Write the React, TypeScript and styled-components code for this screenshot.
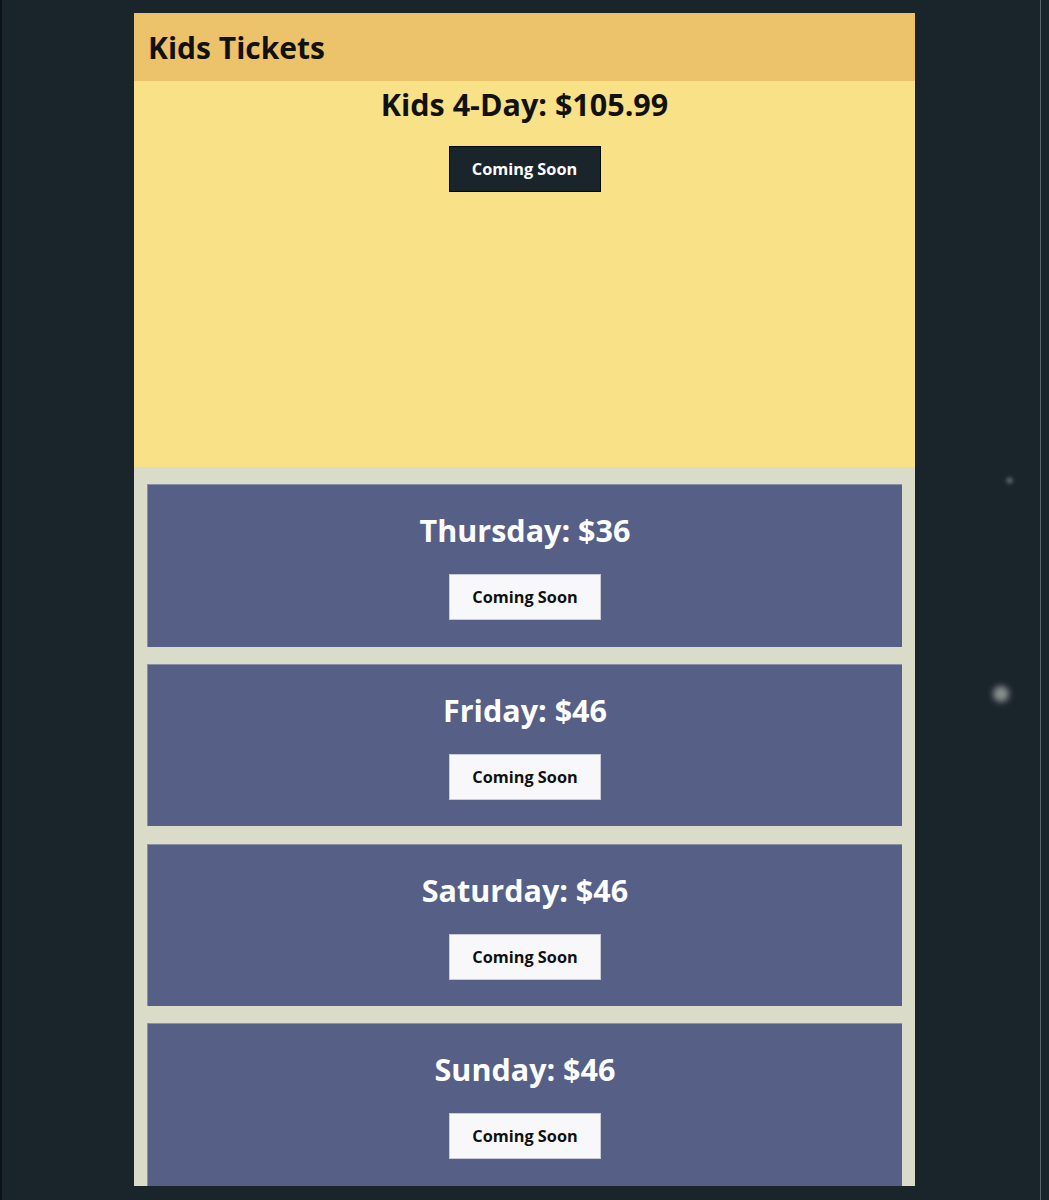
import React from "react";
import styled, { createGlobalStyle } from "styled-components";

const GlobalStyle = createGlobalStyle`
  html, body {
    margin: 0;
    padding: 0;
    background: #1a242b;
  }
  body {
    font-family: "Open Sans", "Liberation Sans", sans-serif;
  }
`;

const Page = styled.div`
  position: relative;
  width: 1041px;
  min-height: 1200px;
  border-left: 2px solid #0c1216;
  border-right: 1px solid #5d6469;
  padding-top: 13px;
  box-sizing: border-box;
  overflow: hidden;
`;

const Sparkle = styled.span<{ $x: number; $y: number; $size: number; $blur: number }>`
  position: absolute;
  left: ${(p) => p.$x}px;
  top: ${(p) => p.$y}px;
  width: ${(p) => p.$size}px;
  height: ${(p) => p.$size}px;
  border-radius: 50%;
  background: #8c9090;
  filter: blur(${(p) => p.$blur}px);
`;

const Panel = styled.section`
  width: 781px;
  margin-left: 132px;
  display: flex;
  flex-direction: column;
`;

const Header = styled.header`
  height: 68px;
  background: #ecc36b;
  display: flex;
  align-items: center;
  padding: 0 14px;
`;

const HeaderTitle = styled.h1`
  margin: 0;
  font-size: 30px;
  font-weight: 700;
  color: #111;
  letter-spacing: 0;
`;

const Featured = styled.div`
  height: 386px;
  background: #f8e186;
  display: flex;
  flex-direction: column;
  align-items: center;
  padding-top: 3px;
  box-sizing: border-box;
  gap: 22px;
`;

const Price = styled.h2<{ $light?: boolean }>`
  margin: 0;
  font-size: 30.5px;
  line-height: 40px;
  font-weight: 700;
  color: ${(p) => (p.$light ? "#ffffff" : "#111")};
`;

const Button = styled.button<{ $dark?: boolean }>`
  width: 152px;
  height: 46px;
  font-family: "Open Sans", "Liberation Sans", sans-serif;
  font-size: 16.3px;
  font-weight: 700;
  cursor: pointer;
  color: ${(p) => (p.$dark ? "#ffffff" : "#111")};
  background: ${(p) => (p.$dark ? "#1a242b" : "#f8f8fb")};
  border: 1px solid ${(p) => (p.$dark ? "#05090b" : "#c9ccd8")};
  border-radius: 0;
`;

const DayList = styled.div`
  background: #dadbc9;
  padding: 17px 13px 0;
  display: flex;
  flex-direction: column;
  gap: 17.3px;
`;

const DayCard = styled.div`
  height: 162.5px;
  box-sizing: border-box;
  background: #566087;
  border-top: 1px solid #8a8fa6;
  border-left: 1px solid #8a8fa6;
  display: flex;
  flex-direction: column;
  align-items: center;
  padding-top: 25px;
  gap: 24px;
`;

const days = [
  { name: "Thursday", price: 36 },
  { name: "Friday", price: 46 },
  { name: "Saturday", price: 46 },
  { name: "Sunday", price: 46 },
];

export default function App() {
  return (
    <Page>
      <GlobalStyle />
      <Sparkle $x={1005} $y={478} $size={5} $blur={2} />
      <Sparkle $x={991} $y={686} $size={16} $blur={3} />
      <Panel>
        <Header>
          <HeaderTitle>Kids Tickets</HeaderTitle>
        </Header>
        <Featured>
          <Price>Kids 4-Day: $105.99</Price>
          <Button $dark>Coming Soon</Button>
        </Featured>
        <DayList>
          {days.map((d) => (
            <DayCard key={d.name}>
              <Price $light>
                {d.name}: ${d.price}
              </Price>
              <Button>Coming Soon</Button>
            </DayCard>
          ))}
        </DayList>
      </Panel>
    </Page>
  );
}
